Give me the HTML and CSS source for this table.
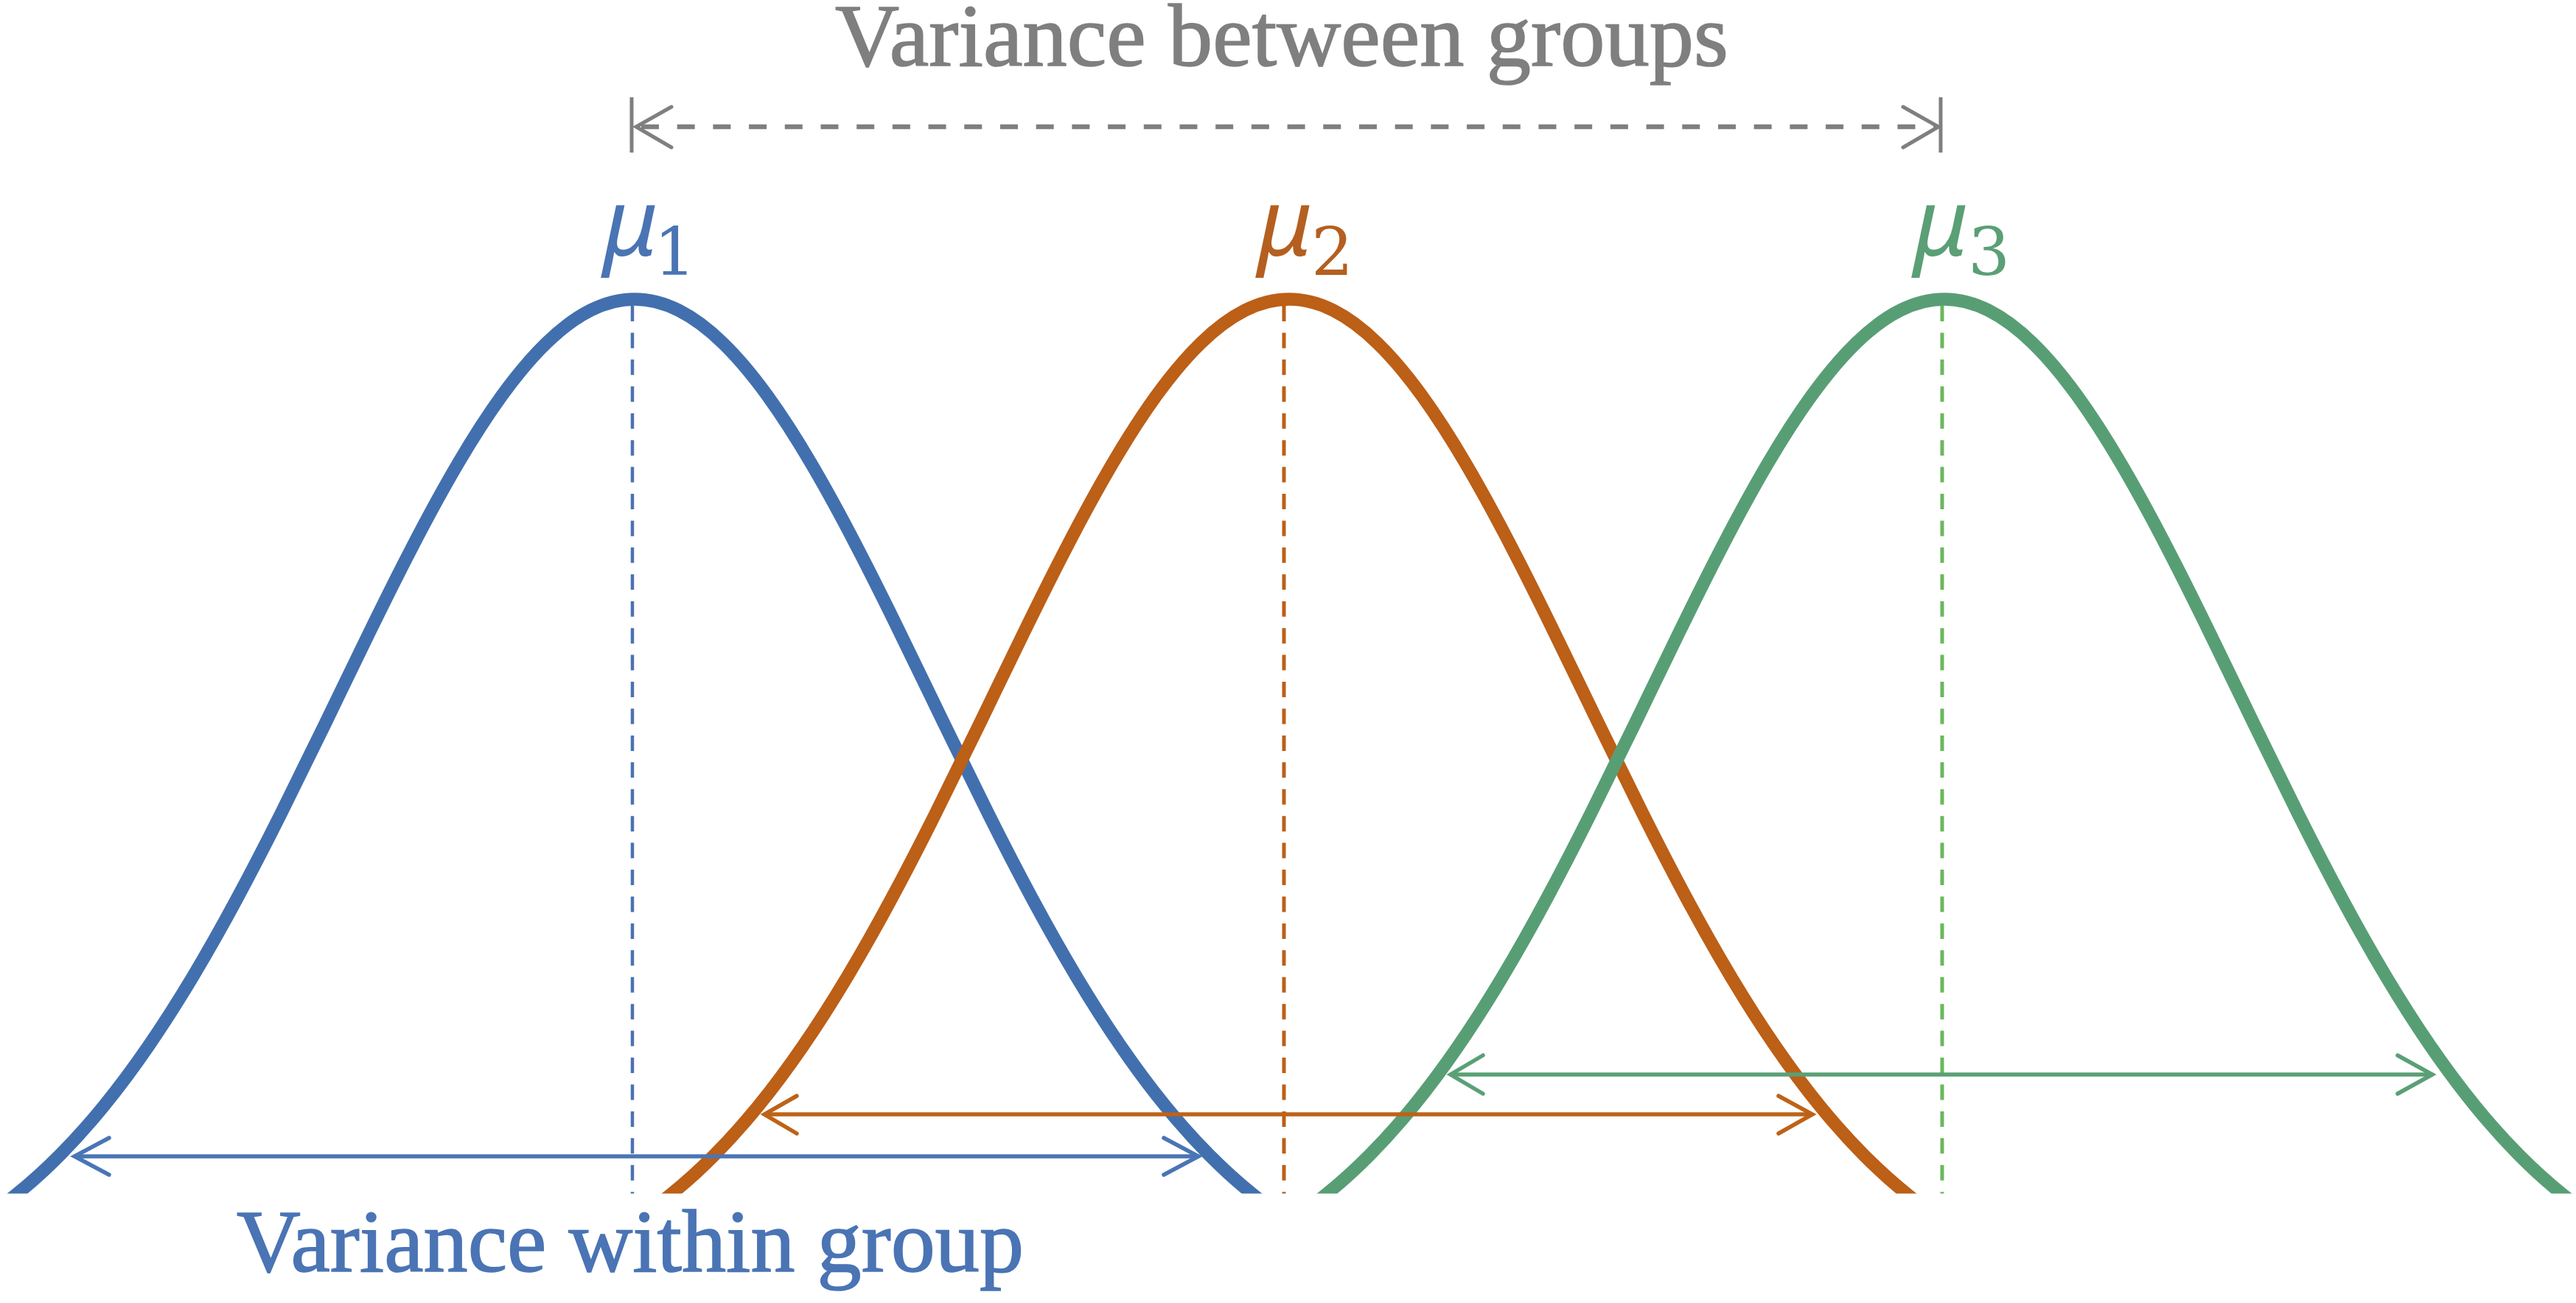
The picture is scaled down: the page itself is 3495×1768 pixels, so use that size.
FILE: index.html
```html
<!DOCTYPE html>
<html lang="en">
<head>
<meta charset="utf-8">
<title>Variance between and within groups</title>
<link rel="stylesheet" href="styles.css">
</head>
<body>
<main class="canvas">
<svg class="diagram" width="3495" height="1768" viewBox="0 0 3495 1768" xmlns="http://www.w3.org/2000/svg">
  <defs>
    <path id="bell" d="M-900,1664.27 C-880,1651.82 -860,1637.68 -840,1621.63 C-820,1605.58 -800,1587.59 -780,1567.46 C-760,1547.33 -740,1525.06 -720,1500.51 C-700,1475.96 -680,1449.10 -660,1420.02 C-640,1390.94 -620,1359.63 -600,1326.23 C-580,1292.83 -560,1257.37 -540,1220.23 C-520,1183.09 -500,1144.27 -480,1104.37 C-460,1064.47 -440,1023.53 -420,982.27 C-400,941.01 -380,899.41 -360,858.53 C-340,817.65 -320,777.43 -300,738.93 C-280,700.43 -260,663.68 -240,629.63 C-220,595.58 -200,564.29 -180,536.68 C-160,509.07 -140,485.16 -120,465.70 C-100,446.24 -80,431.23 -60,421.17 C-40,411.11 -20,406 0,406 C20,406 40,411.11 60,421.17 C80,431.23 100,446.24 120,465.70 C140,485.16 160,509.07 180,536.68 C200,564.29 220,595.58 240,629.63 C260,663.68 280,700.43 300,738.93 C320,777.43 340,817.65 360,858.53 C380,899.41 400,941.01 420,982.27 C440,1023.53 460,1064.47 480,1104.37 C500,1144.27 520,1183.09 540,1220.23 C560,1257.37 580,1292.83 600,1326.23 C620,1359.63 640,1390.94 660,1420.02 C680,1449.10 700,1475.96 720,1500.51 C740,1525.06 760,1547.33 780,1567.46 C800,1587.59 820,1605.58 840,1621.63 C860,1637.68 880,1651.82 900,1664.27"/>
    <clipPath id="plot" clipPathUnits="userSpaceOnUse">
      <rect x="-200" y="0" width="3900" height="1619.5"/>
    </clipPath>
  </defs>

  <!-- between-groups label and arrow -->
  <text class="label label-gray" x="1133" y="89" textLength="1212" lengthAdjust="spacingAndGlyphs">Variance between groups</text>
  <line class="bar-gray" x1="857" y1="132" x2="857" y2="207"/>
  <line class="bar-gray" x1="2633" y1="132" x2="2633" y2="207"/>
  <line class="dash-gray" x1="870" y1="172" x2="2626" y2="172"/>
  <polyline class="head head-gray" points="911,145 863,172 911,200"/>
  <polyline class="head head-gray" points="2582,145 2630,172 2582,200"/>

  <!-- mean labels -->
  <text class="mean-label mu-blue" x="818" y="347"><tspan class="mu">μ</tspan><tspan class="sub" x="887" y="373">1</tspan></text>
  <text class="mean-label mu-orange" x="1706" y="347"><tspan class="mu">μ</tspan><tspan class="sub" x="1779" y="373">2</tspan></text>
  <text class="mean-label mu-green" x="2596" y="347"><tspan class="mu">μ</tspan><tspan class="sub" x="2670" y="373">3</tspan></text>

  <g clip-path="url(#plot)">
    <line class="mean mean-blue" x1="858" y1="415" x2="858" y2="1640"/>
    <line class="mean mean-orange" x1="1742" y1="415" x2="1742" y2="1640"/>
    <line class="mean mean-green" x1="2635" y1="415" x2="2635" y2="1640"/>
    <use href="#bell" class="curve curve-blue" transform="translate(861 0)"/>
    <use href="#bell" class="curve curve-orange" transform="translate(1749 0)"/>
    <use href="#bell" class="curve curve-green" transform="translate(2638 0)"/>
  </g>

  <!-- within-group arrows -->
  <line class="span span-blue" x1="104" y1="1569" x2="1623" y2="1569"/>
  <polyline class="head head-blue" points="148,1544 101,1569 148,1594"/>
  <polyline class="head head-blue" points="1579,1544 1626,1569 1579,1594"/>

  <line class="span span-orange" x1="1040" y1="1512" x2="2456" y2="1512"/>
  <polyline class="head head-orange" points="1081,1487 1037,1512 1081,1538"/>
  <polyline class="head head-orange" points="2413,1487 2459,1512 2413,1538"/>

  <line class="span span-green" x1="1971" y1="1458" x2="3297" y2="1458"/>
  <polyline class="head head-green" points="2012,1432 1968,1458 2012,1484"/>
  <polyline class="head head-green" points="3253,1432 3300,1458 3253,1484"/>

  <text class="label label-blue" x="321" y="1725" textLength="1068" lengthAdjust="spacingAndGlyphs">Variance within group</text>
</svg>
</main>
</body>
</html>
```

FILE: styles.css
```css
html, body {
  margin: 0;
  padding: 0;
  background: #ffffff;
}

.canvas {
  width: 3495px;
  height: 1768px;
  overflow: hidden;
}

.diagram {
  display: block;
}

.label {
  font-family: "Liberation Serif", "Times New Roman", serif;
  font-size: 121px;
  stroke-width: 1.6px;
}

.label-gray { fill: #7f7f7f; stroke: #7f7f7f; }
.label-blue { fill: #4a74b4; stroke: #4a74b4; }

.mean-label {
  font-family: "DejaVu Serif", "Liberation Serif", serif;
}

.mu {
  font-family: "Noto Sans", "DejaVu Sans", sans-serif;
  font-style: italic;
  font-size: 127px;
}

.sub {
  font-family: "DejaVu Serif", "Liberation Serif", serif;
  font-style: normal;
  font-size: 90px;
}

.mu-blue { fill: #4a74b4; }
.mu-orange { fill: #b45f1f; }
.mu-green { fill: #5a9f76; }

.bar-gray {
  stroke: #7f7f7f;
  stroke-width: 5;
}

.dash-gray {
  stroke: #7f7f7f;
  stroke-width: 6.5;
  stroke-dasharray: 24 24.7;
}

.head {
  fill: none;
  stroke-width: 5.5;
  stroke-linecap: round;
  stroke-linejoin: miter;
}

.head-gray { stroke: #7f7f7f; stroke-width: 5; }
.head-blue { stroke: #4a75b5; }
.head-orange { stroke: #be6218; }
.head-green { stroke: #5aa076; }

.span {
  stroke-width: 5.3;
}

.span-blue { stroke: #4a75b5; }
.span-orange { stroke: #be6218; }
.span-green { stroke: #5aa076; }

.mean {
  stroke-width: 5;
  stroke-dasharray: 21 15.43;
}

.mean-blue { stroke: #4a72b2; stroke-width: 4.5; }
.mean-orange { stroke: #bc5f17; }
.mean-green { stroke: #6ab85c; }

.curve {
  fill: none;
  stroke-width: 17.5;
  stroke-linejoin: round;
}

.curve-blue { stroke: #4270ae; }
.curve-orange { stroke: #bc5f17; }
.curve-green { stroke: #589e74; }
```
